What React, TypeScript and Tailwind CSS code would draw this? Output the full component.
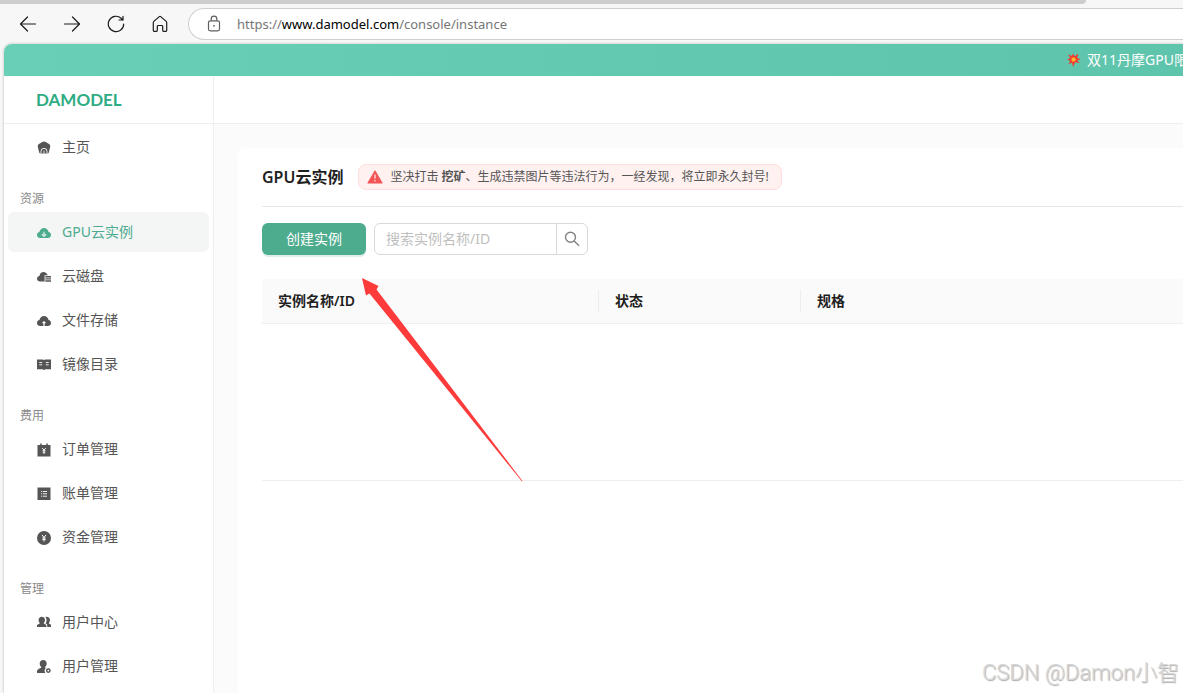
import React from "react";

type IconProps = { children: React.ReactNode };

function MenuIcon({ children }: IconProps) {
  return (
    <svg viewBox="0 0 14 14" className="mt-0.5 size-3.5 shrink-0" fill="currentColor" aria-hidden="true">
      {children}
    </svg>
  );
}

const cloud = "M3.2 12C1.4 12 0 10.700 0 9c0-1.500 1-2.600 2.400-2.900C2.800 3.700 4.700 2 7 2s4.200 1.700 4.600 4.100C13 6.400 14 7.500 14 9c0 1.700-1.400 3-3.200 3z";

const icons = {
  home: (
    <MenuIcon>
      <path d="M7 .6Q8.500.8 10.800 2.300 12.800 3.500 13.200 4.300 13.400 5.200 12.800 7.500L11.900 11.300Q11.500 12.500 10.500 12.500H3.500Q2.500 12.500 2.100 11.300L1.200 7.500Q.6 5.200.8 4.300 1.200 3.500 3.200 2.300 5.500.8 7 .6z" />
      <path d="M4 12.600V10.300a3 3 0 0 1 6 0v2.300" fill="none" stroke="#fff" strokeWidth="0.900" />
      <path d="M6.400 9.800h1.200v3H6.400z" fill="#fff" fillOpacity="0.700" />
    </MenuIcon>
  ),
  gpu: (
    <MenuIcon>
      <path d={cloud} />
      <path d="M7 5.800v4.500M4.800 8.200 7 10.300l2.200-2.100" fill="none" stroke="#d5e9e2" strokeWidth="1.300" />
    </MenuIcon>
  ),
  disk: (
    <MenuIcon>
      <path d="M3.200 11.500C1.300 11.500 0 10.300 0 8.700c0-1.400 1-2.500 2.400-2.700C2.800 3.600 4.400 2 6.500 2c2 0 3.600 1.300 4.200 3.200H7.600v6.300z" />
      <path d="M8.300 6.100H14v1.400H8.300zM8.300 8.200H14v1.400H8.300zM8.300 10.300H14v1.400H8.300z" />
    </MenuIcon>
  ),
  file: (
    <MenuIcon>
      <path d={cloud} />
      <path d="M7 12V8.200M5.600 9.200 7 7.800l1.400 1.400" fill="none" stroke="#fff" strokeWidth="1.200" />
    </MenuIcon>
  ),
  book: (
    <MenuIcon>
      <path d="M0 1.500h5.500Q6.600 1.500 7 2.100 7.400 1.500 8.500 1.500H14v9.700H8.700L7 12.100l-1.700-.9H0z" />
      <path d="M2.300 4.500h2.900M2.300 6.800h2.900M8.800 4.500h2.900M8.800 6.800h2.900" stroke="#fff" strokeWidth="0.900" />
    </MenuIcon>
  ),
  order: (
    <MenuIcon>
      <path d="M.5 2h2.700V.6h1.500V2h4.600V.6h1.500V2h2.700v11.500H.5z" />
      <path d="M5.200 5 7 7.200 8.800 5M7 7.200V11M5.600 7.700h2.800M5.600 9.200h2.800" fill="none" stroke="#fff" strokeWidth="0.900" />
    </MenuIcon>
  ),
  bill: (
    <MenuIcon>
      <path d="M.5.500h13v12.500H.5z" />
      <path d="M4 4.500h1.200M6 4.500h4M4 6.800h1.200M6 6.800h4M4 9.200h1.200M6 9.200h4" stroke="#fff" strokeWidth="0.900" />
    </MenuIcon>
  ),
  money: (
    <MenuIcon>
      <circle cx="7" cy="7" r="7" />
      <path d="M5 3.900 7 6.500l2-2.600M7 6.500v4M5.300 7h3.400M5.300 8.600h3.400" fill="none" stroke="#fff" strokeWidth="1" />
    </MenuIcon>
  ),
  users: (
    <MenuIcon>
      <path d="M4.800.8C6.800.8 8 2.200 8 4c0 1.300-.5 2.200-1.200 2.900v.7L9.300 8.900v2.200H0V8.900l2.700-1.300v-.7C2 6.200 1.600 5.300 1.600 4 1.600 2.200 2.800.8 4.800.8z" />
      <path d="M8.400.9c2.700-.5 4.600 1 4.600 3.200 0 1.200-.4 2.100-1.100 2.700v.6L14 8.800v2.300h-3.800V8.500L8.600 7.400c.6-.9 1-1.900 1-3.200 0-1.300-.4-2.400-1.200-3.300z" />
    </MenuIcon>
  ),
  userSet: (
    <MenuIcon>
      <path d="M6.200 0c2.100 0 3.500 1.400 3.500 3.400 0 1.500-.7 2.600-1.600 3.300v.8l.8.400c-1.300.9-1.900 3.100-.6 5H0v-1.700c0-1.500 1.300-2.300 4.200-3.500V6.700c-.9-.7-1.500-1.800-1.500-3.300C2.700 1.400 4.100 0 6.200 0z" />
      <circle cx="11.300" cy="10.600" r="1.700" fill="none" stroke="currentColor" strokeWidth="1.500" />
    </MenuIcon>
  ),
};

type Item = { label: string; icon: React.ReactNode; active?: boolean };
type Group = { title?: string; items: Item[] };

const groups: Group[] = [
  { items: [{ label: "主页", icon: icons.home }] },
  {
    title: "资源",
    items: [
      { label: "GPU云实例", icon: icons.gpu, active: true },
      { label: "云磁盘", icon: icons.disk },
      { label: "文件存储", icon: icons.file },
      { label: "镜像目录", icon: icons.book },
    ],
  },
  {
    title: "费用",
    items: [
      { label: "订单管理", icon: icons.order },
      { label: "账单管理", icon: icons.bill },
      { label: "资金管理", icon: icons.money },
    ],
  },
  {
    title: "管理",
    items: [
      { label: "用户中心", icon: icons.users },
      { label: "用户管理", icon: icons.userSet },
    ],
  },
];

function ToolButton({ label, children }: { label: string; children: React.ReactNode }) {
  return (
    <button type="button" aria-label={label} className="flex size-6 items-center justify-center text-[#1b1b1b]">
      <svg viewBox="0 0 18 18" className="size-[18px]" fill="none" stroke="currentColor" strokeWidth="1.200" strokeLinecap="round" strokeLinejoin="round">
        {children}
      </svg>
    </button>
  );
}

function BrowserBar() {
  return (
    <div className="shrink-0">
      <div className="mr-[97px] h-1 rounded-br-md bg-[#cdcdcd]" />
      <div className="flex h-10 items-center pl-4">
        <div className="flex gap-5">
          <ToolButton label="后退">
            <path d="M16.500 9H1.500M8.500 2 1.500 9l7 7" />
          </ToolButton>
          <ToolButton label="前进">
            <path d="M1.500 9h15M9.500 2l7 7-7 7" />
          </ToolButton>
          <ToolButton label="刷新">
            <path d="M16.700 9a7.700 7.700 0 1 1-2.600-5.800L16 5M16 1.300V5h-4" />
          </ToolButton>
          <ToolButton label="主页">
            <path d="M2.300 7.400Q2.300 6.800 2.800 6.400L8.300 1.600Q9 1 9.700 1.600l5.500 4.800q.5.400.5 1V15.500q0 .8-.8.800h-2.400q-.8 0-.8-.8V11.300q0-.8-.8-.8H7.100q-.8 0-.8.800v4.200q0 .8-.8.800H3.100q-.8 0-.8-.8z" />
          </ToolButton>
        </div>
        <div className="ml-4 flex h-8 flex-1 items-center gap-[15px] rounded-l-full border border-r-0 border-[#cfcfcf] bg-white pl-[17px]">
          <svg viewBox="0 0 16 18" className="h-[18px] w-4 shrink-0" fill="none" stroke="#5f5f5f" strokeWidth="1.200" aria-hidden="true">
            <rect x="2.500" y="5.800" width="11" height="10" rx="1.800" />
            <path d="M5.200 5.800V4a2.800 2.800 0 0 1 5.600 0v1.800" />
            <circle cx="8" cy="10.800" r="0.900" fill="#5f5f5f" stroke="none" />
          </svg>
          <div role="textbox" aria-label="地址栏" className="text-[13px] leading-5 text-[#767676]">
            https://<span className="text-black">www.damodel.com</span>/console/instance
          </div>
        </div>
      </div>
    </div>
  );
}

function Sidebar() {
  return (
    <aside className="flex w-[210px] shrink-0 flex-col border-r border-[#efefef] bg-white">
      <div className="flex h-12 shrink-0 items-center border-b border-[#efefef] pl-8">
        <a href="#home" className="font-[Lato] text-[17px] font-bold leading-5 text-[#2fac84]">
          DAMODEL
        </a>
      </div>
      <nav className="flex flex-col px-1 pt-[3px]">
        {groups.map((group, i) => (
          <div key={i} className="flex flex-col">
            {group.title && (
              <h2 className="px-3 pt-[23px] pb-1 text-xs leading-[18px] text-[#8a8a8a]">{group.title}</h2>
            )}
            <ul className="flex flex-col gap-1">
              {group.items.map((item) => (
                <li key={item.label}>
                  <a
                    href="#menu"
                    className={
                      item.active
                        ? "flex h-10 items-center gap-[11px] rounded-md bg-[#f4f6f6] pl-[29px] text-sm text-[#4dab8e]"
                        : "flex h-10 items-center gap-[11px] rounded-md pl-[29px] text-sm text-[#555555]"
                    }
                  >
                    {item.icon}
                    {item.label}
                  </a>
                </li>
              ))}
            </ul>
          </div>
        ))}
      </nav>
    </aside>
  );
}

function InstancePanel() {
  return (
    <section className="mt-6 ml-6 flex-1 rounded-tl-lg bg-white pt-4 pl-6">
      <div className="flex items-center gap-[15px] border-b border-[#e8e8e8] pb-4">
        <h1 className="text-base font-semibold leading-6 text-[#1f1f1f]">GPU云实例</h1>
        <p className="flex h-[26px] items-center gap-[7px] rounded-lg border border-[#ffdedb] bg-[#fff1f0] pr-3 pl-2 text-xs text-[#555555]">
          <svg viewBox="0 0 16 14" className="h-3.5 w-4" aria-hidden="true">
            <path d="M8 1 15 13H1z" fill="#f25555" stroke="#f25555" strokeWidth="1.200" strokeLinejoin="round" />
            <path d="M8 4.500v4.200M8 10v1.500" stroke="#fff" strokeOpacity="0.800" strokeWidth="1.300" />
          </svg>
          <span>
            坚决打击 <strong className="font-semibold">挖矿</strong>、生成违禁图片等违法行为，一经发现，将立即永久封号!
          </span>
        </p>
      </div>

      <div className="flex gap-2 pt-4">
        <button type="button" className="h-8 w-[104px] rounded-md bg-[#4dab8e] text-sm text-white shadow-[0_2px_0_#e0ede9]">
          创建实例
        </button>
        <form className="flex h-8 w-[214px] overflow-hidden rounded-md border border-[#d9d9d9]" onSubmit={(e) => e.preventDefault()}>
          <input
            type="text"
            aria-label="搜索实例名称/ID"
            placeholder="搜索实例名称/ID"
            className="min-w-0 flex-1 px-[11px] text-sm outline-none placeholder:text-[#bfbfbf]"
          />
          <button type="submit" aria-label="搜索" className="flex w-[31px] items-center justify-center border-l border-[#d9d9d9] text-[#808080]">
            <svg viewBox="0 0 16 16" className="size-4" fill="none" stroke="currentColor" strokeWidth="1.400" aria-hidden="true">
              <circle cx="6.500" cy="6.300" r="5" />
              <path d="M10.200 9.900 15 14.700" />
            </svg>
          </button>
        </form>
      </div>

      <table className="mt-6 w-full table-fixed border-collapse text-left text-sm">
        <thead>
          <tr className="h-11 border-b border-[#efefef] bg-[#fafafa] text-[#1f1f1f]">
            <th className="w-[337px] p-0 font-semibold">
              <div className="border-r border-[#ededed] pl-4 leading-[22px]">实例名称/ID</div>
            </th>
            <th className="w-[202px] p-0 font-semibold">
              <div className="border-r border-[#ededed] pl-4 leading-[22px]">状态</div>
            </th>
            <th className="p-0 font-semibold">
              <div className="pl-4 leading-[22px]">规格</div>
            </th>
          </tr>
        </thead>
        <tbody>
          <tr className="h-[157px] border-b border-[#efefef]">
            <td colSpan={3} />
          </tr>
        </tbody>
      </table>
    </section>
  );
}

export default function App() {
  return (
    <div className="relative flex h-screen flex-col overflow-hidden bg-[#f7f7f7] font-['Noto_Sans','Noto_Sans_CJK_SC',sans-serif]">
      <BrowserBar />
      <div className="ml-1 flex min-h-0 flex-1 flex-col overflow-hidden rounded-tl-lg bg-[#fbfbfb] shadow-[0_0_3px_rgba(0,0,0,0.25)]">
        <div className="flex h-8 shrink-0 items-center justify-end bg-linear-to-r from-[#68d0b7] to-[#5ec4ac] text-white">
          <div className="flex w-[116px] shrink-0 items-center gap-1.5 overflow-hidden text-sm whitespace-nowrap">
            <svg viewBox="0 0 14 14" className="size-3.5 shrink-0" aria-hidden="true">
              <path d="M1 1.300 4.700 3 6.200.4 7.500 3.200 11.500.8 10.200 4.800 13.700 6.300 10.300 7.200 12.500 10.300 8.300 9 6 13.900 5 9.500 1.300 11.500 3.200 8 0 6.300 3.300 5.200z" fill="#f03a2e" />
              <path d="M4.500 4.500 6.300 4.800 8 4.200 8.100 5.800 9.600 6.500 8.200 7.300 8 8.600 6.600 8.200 5.500 9.200 5.200 7.700 4 7 4.900 6z" fill="#ffb52e" />
            </svg>
            <span>双11丹摩GPU限</span>
          </div>
        </div>
        <div className="flex min-h-0 flex-1">
          <Sidebar />
          <main className="flex min-w-0 flex-1 flex-col">
            <header className="h-12 shrink-0 border-b border-[#efefef] bg-white" />
            <InstancePanel />
          </main>
        </div>
      </div>

      <svg viewBox="0 0 162 204" className="pointer-events-none absolute top-[278px] left-[362px] h-[204px] w-[162px]" aria-hidden="true">
        <path d="M0 0 16.500 8 14.500 11.500 160.500 203 160 203.500 7.500 15.500 4 17.500z" fill="#fc3b3a" />
      </svg>
      <div className="pointer-events-none absolute right-1 bottom-1 font-[Roboto,'Noto_Sans_CJK_SC',sans-serif] text-[22px] leading-8 font-light text-[#d6d6d6] [text-shadow:1px_1px_1px_#aaa]">
        CSDN @Damon小智
      </div>
    </div>
  );
}
